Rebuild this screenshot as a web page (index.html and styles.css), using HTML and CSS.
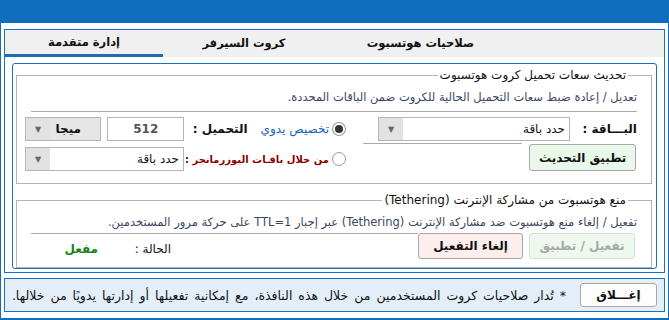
FILE: index.html
```html
<!DOCTYPE html>
<html lang="ar" dir="rtl">
<head>
    <meta charset="UTF-8">
    <title>إدارة متقدمة</title>
<link rel="stylesheet" href="styles.css">
</head>
<body>
    <div class="window">
        <div class="titlebar"></div>
        <div class="client">
            <div class="tabframe">
                <div class="tabs">
                    <div class="tab t1">صلاحيات هوتسبوت</div>
                    <div class="tab t2">كروت السيرفر</div>
                    <div class="tab t3 active">إدارة متقدمة</div>
                </div>
                <div class="page">
                    <fieldset class="group g1">
                        <legend>تحديث سعات تحميل كروت هوتسبوت</legend>
                        <p class="desc">تعديل / إعادة ضبط سعات التحميل الحالية للكروت ضمن الباقات المحددة.</p>
                        <div class="sep"></div>
                        <div class="controls">
                            <div class="col-right">
                                <div class="line">
                                    <span class="lbl">البـــاقة :</span>
                                    <div class="combo pkg"><span class="val">حدد باقة</span><span class="arrow">▼</span></div>
                                </div>
                                <div class="line line2">
                                    <button class="btn apply">تطبيق التحديث</button>
                                    <div class="sep short"></div>
                                </div>
                            </div>
                            <div class="col-left">
                                <div class="line">
                                    <span class="radio checked"></span>
                                    <span class="opt blue">تخصيص يدوي</span>
                                    <span class="lbl load">التحميل :</span>
                                    <div class="input">512</div>
                                    <div class="combo unit"><span class="val">ميجا</span><span class="arrow">▼</span></div>
                                </div>
                                <div class="line">
                                    <span class="radio"></span>
                                    <span class="opt red">من خلال باقـات اليوزرمانجر :</span>
                                    <div class="combo um"><span class="val">حدد باقة</span><span class="arrow">▼</span></div>
                                </div>
                            </div>
                        </div>
                    </fieldset>
                    <fieldset class="group g2">
                        <legend>منع هوتسبوت من مشاركة الإنترنت (Tethering)</legend>
                        <p class="desc">تفعيل / إلغاء منع هوتسبوت ضد مشاركة الإنترنت (Tethering) عبر إجبار TTL=1 على حركة مرور المستخدمين.</p>
                        <div class="actions">
                            <button class="btn enable" disabled>تفعيل / تطبيق</button>
                            <button class="btn disable">إلغاء التفعيل</button>
                            <div class="status-side">
                                <div class="sep"></div>
                                <div class="status">
                                    <span class="st-label">الحالة :</span>
                                    <span class="st-val">مفعل</span>
                                </div>
                            </div>
                        </div>
                    </fieldset>
                </div>
            </div>
            <div class="footer">
                <button class="btn close">إغـــلاق</button>
                <span class="note">* تُدار صلاحيات كروت المستخدمين من خلال هذه النافذة، مع إمكانية تفعيلها أو إدارتها يدويًا من خلالها.</span>
            </div>
        </div>
    </div>
</body>
</html>
```

FILE: styles.css
```css
* {
    box-sizing: border-box;
}
body {
    margin: 0;
    width: 669px;
    height: 320px;
    overflow: hidden;
    font-family: Tahoma, "DejaVu Sans", sans-serif;
    font-size: 12px;
    color: #111;
    background-color: #ffffff;
}
.window {
    width: 669px;
    height: 320px;
    border: 1px solid #106ebe;
    border-top: none;
    border-bottom-width: 2px;
}
.titlebar {
    height: 23px;
    margin: 0 -1px;
    background-color: #106ebe;
}
.client {
    padding: 6px 3px 0 3px;
}
.tabframe {
    height: 244px;
    border: 1px solid #1a70c0;
    display: flex;
    flex-direction: column;
}
.tabs {
    height: 27px;
    background-color: #f0f0f0;
    display: flex;
    justify-content: flex-end;
}
.tab {
    height: 27px;
    line-height: 26px;
    text-align: center;
    font-weight: bold;
    font-size: 11.5px;
}
.t1 { width: 191px; }
.t2 { width: 162px; }
.t3 { width: 158px; }
.tab.active {
    border-bottom: 3px solid #1a6bb8;
    line-height: 24px;
}
.page {
    margin: 6px 7px 6px 7px;
    flex: 1;
    border: 1px solid #1a70c0;
    border-radius: 3px;
    padding: 4px 4px 0 3px;
}
.group {
    margin: 0;
    border: 1px solid #b4b4b4;
    padding: 0 14px 0 14px;
}
.group legend {
    padding: 0 2px 0 2px;
    margin-right: 9px;
    font-size: 12px;
    line-height: 14px;
    color: #111;
}
.g1 {
    height: 116px;
}
.g2 {
    height: 75px;
    margin-top: 9px;
}
.desc {
    margin: 8px 0 0 0;
    line-height: 15px;
    color: #3b4663;
    font-size: 11.5px;
}
.sep {
    height: 1px;
    background-color: #aaaaaa;
    margin-top: 6px;
}
.controls {
    display: flex;
    justify-content: space-between;
    margin: 5px 0 0 -6px;
}
.col-right {
    width: 274px;
}
.col-left {
    width: 321px;
}
.line {
    display: flex;
    align-items: center;
    height: 24px;
    margin-bottom: 6px;
}
.line2 {
    align-items: flex-start;
    margin-top: -4px;
    height: 30px;
}
.lbl {
    font-weight: bold;
    white-space: nowrap;
}
.col-right .lbl {
    width: 64px;
}
.combo {
    height: 24px;
    border: 1px solid #b4b4b4;
    display: flex;
    align-items: center;
    background-color: #ffffff;
}
.combo .val {
    flex: 1;
    padding-right: 4px;
}
.combo .arrow {
    width: 24px;
    height: 100%;
    background-color: #e2e2e2;
    color: #666;
    font-size: 8px;
    display: flex;
    align-items: center;
    justify-content: center;
}
.pkg {
    width: 192px;
    margin-right: 3px;
}
.unit {
    width: 77px;
    margin-right: 6px;
    background-color: #e6e6e6;
    font-weight: bold;
}
.unit .val {
    text-align: center;
    padding-right: 14px;
}
.um {
    width: 159px;
    margin-right: 3px;
}
.sep.short {
    width: 160px;
    margin: 0 7px 0 0;
}
.radio {
    width: 14px;
    height: 14px;
    border: 1px solid #9a9a9a;
    border-radius: 50%;
    background-color: #ffffff;
    display: flex;
    align-items: center;
    justify-content: center;
}
.radio.checked::after {
    content: "";
    width: 8px;
    height: 8px;
    border-radius: 50%;
    background-color: #333;
}
.opt {
    margin-right: 3px;
    white-space: nowrap;
}
.blue {
    color: #1560bd;
    width: 70px;
}
.red {
    color: #8b0000;
    font-weight: bold;
    font-size: 10px;
    width: 142px;
}
.load {
    margin-right: 12px;
    width: 60px;
}
.input {
    width: 77px;
    height: 24px;
    margin-right: 4px;
    border: 1px solid #b4b4b4;
    text-align: center;
    line-height: 22px;
    font-weight: bold;
    color: #555;
}
.btn {
    font-family: Tahoma, "DejaVu Sans", sans-serif;
    font-size: 12px;
    font-weight: bold;
    color: #111;
    border: 1px solid #a8a8a8;
    border-radius: 3px;
    background-color: #fdfdfd;
    padding: 0;
}
.apply {
    width: 107px;
    height: 27px;
    margin-top: 1px;
    margin-right: 1px;
    background-color: #eaf8ea;
}
.actions {
    display: flex;
    margin-top: 3px;
    height: 27px;
}
.enable {
    width: 106px;
    height: 26px;
    background-color: #eef8ee;
    border-color: #d2e2d2;
    color: #a8a8a8;
    margin-right: 2px;
}
.disable {
    width: 105px;
    height: 26px;
    margin-right: 6px;
    background-color: #fdeeee;
}
.status-side {
    flex: 1;
}
.status-side .sep {
    margin-top: 0;
}
.status {
    display: flex;
    margin-top: 8px;
    margin-right: 247px;
}
.st-label {
    width: 73px;
}
.st-val {
    color: #1a7f1a;
    font-weight: bold;
}
.footer {
    margin-top: 5px;
    height: 34px;
    border: 1px solid #1a70c0;
    background-color: #e4eef9;
    display: flex;
    align-items: center;
    padding-right: 7px;
}
.close {
    width: 77px;
    height: 24px;
    background-color: #fdfdfd;
}
.note {
    margin-right: 14px;
    white-space: nowrap;
    font-size: 12.5px;
    word-spacing: 2px;
}
```
